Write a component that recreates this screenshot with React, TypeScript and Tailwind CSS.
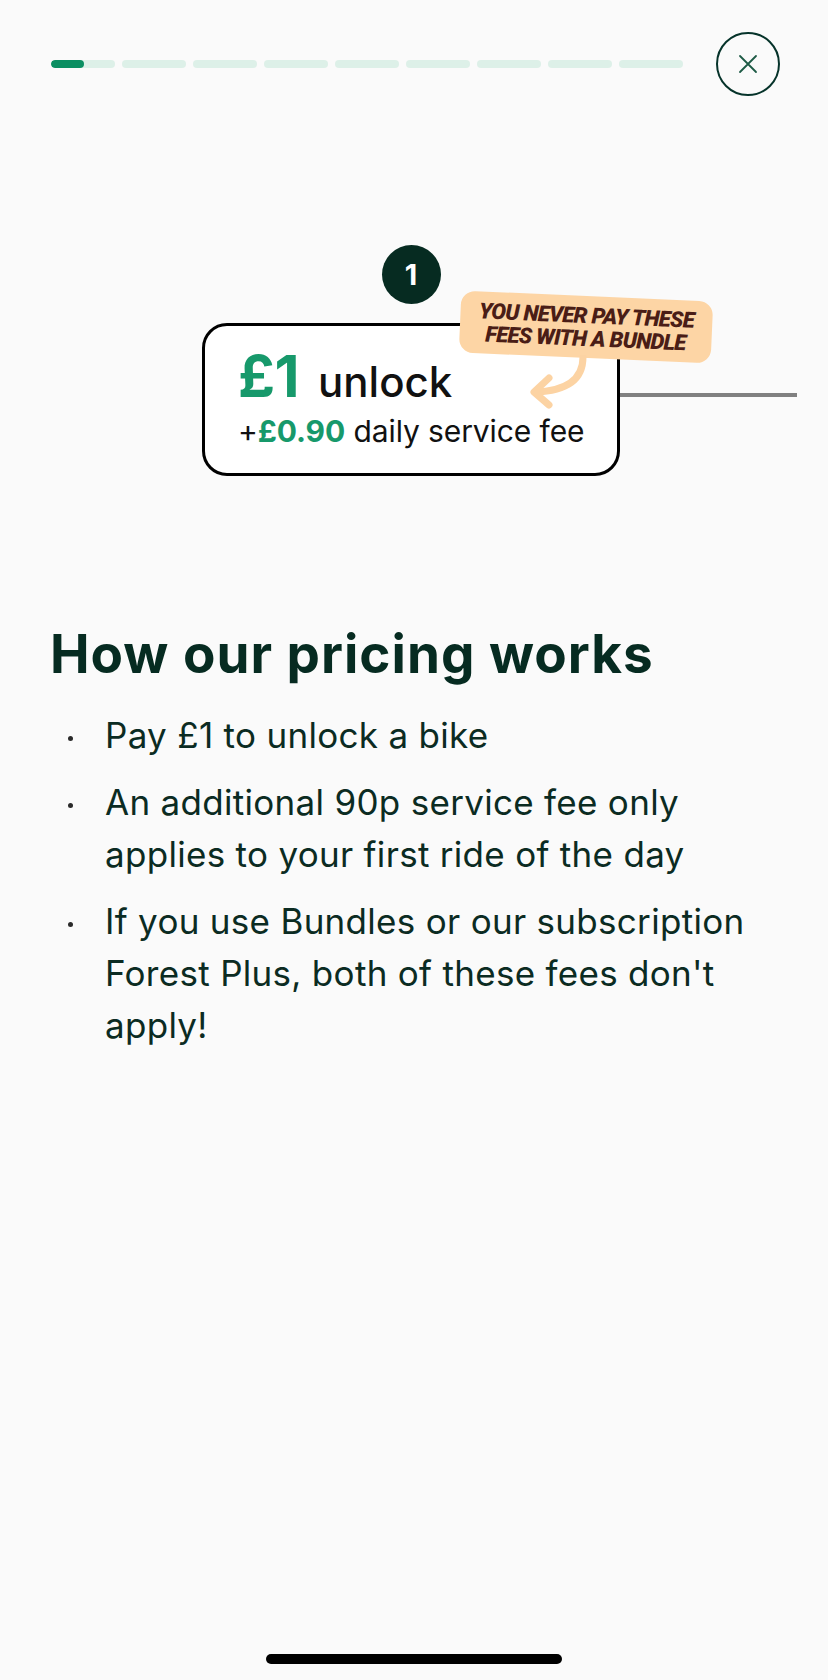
import React from "react";

const Segment = ({ progress }: { progress?: number }) => (
  <div className="relative h-[8px] w-[64px] overflow-hidden rounded-full bg-[#ddf0e8]">
    {progress ? (
      <div className="h-full rounded-full bg-[#0b8f62]" style={{ width: `${progress}%` }} />
    ) : null}
  </div>
);

const Dot = () => (
  <div className="w-[55px] shrink-0">
    <div className="ml-[18px] mt-[27px] h-[5px] w-[5px] rounded-full bg-[#2a2a2a]" />
  </div>
);

export default function App() {
  const font = { fontFamily: "Inter, 'Noto Sans', sans-serif" };
  return (
    <div
      className="relative flex h-[1680px] w-[828px] flex-col overflow-hidden bg-[#fafafa] text-[#062b21]"
      style={font}
    >
      {/* header */}
      <div className="flex items-center justify-between pl-[51px] pr-[48px] pt-[32px]">
        <div className="flex gap-[7px]">
          <Segment progress={52} />
          <Segment />
          <Segment />
          <Segment />
          <Segment />
          <Segment />
          <Segment />
          <Segment />
          <Segment />
        </div>
        <button className="flex h-[64px] w-[64px] items-center justify-center rounded-full border-[2.5px] border-[#06332a]">
          <svg width="20" height="20" viewBox="0 0 20 20" fill="none">
            <path d="M2 2 L18 18 M18 2 L2 18" stroke="#1d5a45" strokeWidth="1.8" strokeLinecap="round" />
          </svg>
        </button>
      </div>

      {/* illustration */}
      <div className="mt-[149px] flex flex-col pl-[202px]">
        <div className="flex w-[418px] justify-center">
          <div className="flex h-[59px] w-[59px] items-center justify-center rounded-full bg-[#062b21] text-[29px] font-bold text-white">
            1
          </div>
        </div>
        <div className="relative mt-[19px] flex items-start">
          <div className="h-[153px] w-[418px] rounded-[25px] border-[3px] border-black bg-white pl-[33px] pt-[21px]">
            <div className="flex items-baseline whitespace-nowrap leading-none">
              <span className="text-[58px] font-bold tracking-[-0.5px] text-[#17996b]">£1</span>
              <span className="ml-[19px] text-[42px] font-medium text-[#111]">unlock</span>
            </div>
            <div className="mt-[11px] whitespace-nowrap text-[30px] leading-none tracking-[-0.1px] text-[#111]">
              +<span className="font-bold text-[#17996b]">£0.90</span> daily service fee
            </div>
          </div>
          <div className="mt-[70px] h-[4px] w-[177px] bg-[#808080]" />

          {/* tag */}
          <div
            className="absolute left-[258px] top-[-27px] flex h-[62px] w-[252px] rotate-[2.5deg] flex-col items-center justify-center rounded-[14px] bg-[#fdd5a5] text-center text-[22px] font-black italic leading-[23px] tracking-[-0.7px] text-[#4a1d16]"
            style={{ fontFamily: "Roboto, 'Liberation Sans', sans-serif" }}
          >
            <span className="block h-[23px]">YOU NEVER PAY THESE</span>
            <span className="block h-[23px]">FEES WITH A BUNDLE</span>
          </div>
          {/* arrow */}
          <svg
            className="absolute left-[323px] top-[32px]"
            width="70"
            height="60"
            viewBox="0 0 70 60"
            fill="none"
          >
            <path
              d="M58 2 C58 24 42 36 10 37"
              stroke="#fcd3a3"
              strokeWidth="7"
              strokeLinecap="round"
            />
            <path
              d="M24 23 L9 37 L24 50"
              stroke="#fcd3a3"
              strokeWidth="7"
              strokeLinecap="round"
              strokeLinejoin="round"
            />
          </svg>
        </div>
      </div>

      {/* text */}
      <div className="mt-[146px] pl-[50px]">
        <h1 className="text-[53px] font-bold leading-[64px] tracking-[1px] text-[#062b21]">
          How our pricing works
        </h1>
        <ul className="mt-[23px] flex flex-col gap-[15px] text-[35px] leading-[52px] tracking-[0.3px] text-[#0b2b22]">
          <li className="flex">
            <Dot />
            <div className="whitespace-nowrap">Pay £1 to unlock a bike</div>
          </li>
          <li className="flex">
            <Dot />
            <div className="whitespace-nowrap">
              An additional 90p service fee only
              <br />
              applies to your first ride of the day
            </div>
          </li>
          <li className="flex">
            <Dot />
            <div className="whitespace-nowrap">
              If you use Bundles or our subscription
              <br />
              Forest Plus, both of these fees don't
              <br />
              apply!
            </div>
          </li>
        </ul>
      </div>

      <div className="flex-1" />
      <div className="mx-auto mb-[16px] h-[10px] w-[296px] rounded-full bg-black" />
    </div>
  );
}
